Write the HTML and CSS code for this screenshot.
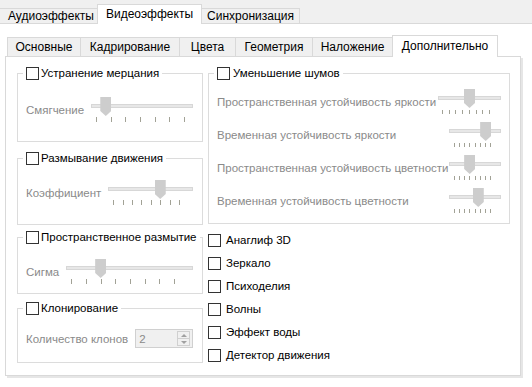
FILE: index.html
```html
<!DOCTYPE html>
<html lang="ru">
<head>
<meta charset="utf-8">
<title>Эффекты</title>
<link rel="stylesheet" href="styles.css">
</head>
<body>
<div class="topbar">
  <div class="otab o1">Аудиоэффекты</div>
  <div class="otab o2 sel">Видеоэффекты</div>
  <div class="otab o3">Синхронизация</div>
</div>
<div class="tabwidget">
  <div class="tabs">
    <div class="tab t1">Основные</div>
    <div class="tab t2">Кадрирование</div>
    <div class="tab t3">Цвета</div>
    <div class="tab t4">Геометрия</div>
    <div class="tab t5">Наложение</div>
    <div class="tab t6 sel">Дополнительно</div>
  </div>
  <div class="pane">
    <div class="col">
      <fieldset class="grp g1">
        <legend><label class="lg"><input type="checkbox"><span>Устранение мерцания</span></label></legend>
        <div class="row">
          <span class="lbl">Смягчение</span>
          <div class="slider s1" style="--v:.1">
            <div class="groove"></div><div class="handle"></div>
            <div class="ticks"><i></i><i></i><i></i><i></i><i></i><i></i><i></i></div>
          </div>
        </div>
      </fieldset>
      <fieldset class="grp g2">
        <legend><label class="lg"><input type="checkbox"><span>Размывание движения</span></label></legend>
        <div class="row">
          <span class="lbl">Коэффициент</span>
          <div class="slider s2" style="--v:.63">
            <div class="groove"></div><div class="handle"></div>
            <div class="ticks"><i></i><i></i><i></i><i></i><i></i><i></i><i></i><i></i></div>
          </div>
        </div>
      </fieldset>
      <fieldset class="grp g3">
        <legend><label class="lg"><input type="checkbox"><span>Пространственное размытие</span></label></legend>
        <div class="row">
          <span class="lbl">Сигма</span>
          <div class="slider s3" style="--v:.25">
            <div class="groove"></div><div class="handle"></div>
            <div class="ticks"><i></i><i></i><i></i><i></i><i></i><i></i><i></i><i></i></div>
          </div>
        </div>
      </fieldset>
      <fieldset class="grp g4">
        <legend><label class="lg"><input type="checkbox"><span>Клонирование</span></label></legend>
        <div class="row">
          <span class="lbl">Количество клонов</span>
          <div class="spin">
            <span class="val">2</span>
            <span class="btns"><i class="up"></i><i class="dn"></i></span>
          </div>
        </div>
      </fieldset>
    </div>
    <div class="col">
      <fieldset class="grp noise">
        <legend><label class="lg lg3"><input type="checkbox"><span>Уменьшение шумов</span></label></legend>
        <div class="nrow">
          <span class="lbl">Пространственная устойчивость яркости</span>
          <div class="slider r1" style="--v:.5">
            <div class="groove"></div><div class="handle"></div>
            <div class="ticks"><i></i><i></i><i></i><i></i><i></i><i></i><i></i><i></i></div>
          </div>
        </div>
        <div class="nrow">
          <span class="lbl">Временная устойчивость яркости</span>
          <div class="slider r2" style="--v:.76">
            <div class="groove"></div><div class="handle"></div>
            <div class="ticks"><i></i><i></i><i></i><i></i><i></i><i></i><i></i><i></i></div>
          </div>
        </div>
        <div class="nrow">
          <span class="lbl">Пространственная устойчивость цветности</span>
          <div class="slider r2" style="--v:.37">
            <div class="groove"></div><div class="handle"></div>
            <div class="ticks"><i></i><i></i><i></i><i></i><i></i><i></i><i></i><i></i></div>
          </div>
        </div>
        <div class="nrow">
          <span class="lbl">Временная устойчивость цветности</span>
          <div class="slider r2" style="--v:.58">
            <div class="groove"></div><div class="handle"></div>
            <div class="ticks"><i></i><i></i><i></i><i></i><i></i><i></i><i></i><i></i></div>
          </div>
        </div>
      </fieldset>
      <ul class="checks">
        <li><label class="ck"><input type="checkbox"><span>Анаглиф 3D</span></label></li>
        <li><label class="ck"><input type="checkbox"><span>Зеркало</span></label></li>
        <li><label class="ck"><input type="checkbox"><span>Психоделия</span></label></li>
        <li><label class="ck"><input type="checkbox"><span>Волны</span></label></li>
        <li><label class="ck"><input type="checkbox"><span>Эффект воды</span></label></li>
        <li><label class="ck"><input type="checkbox"><span>Детектор движения</span></label></li>
      </ul>
    </div>
  </div>
</div>
</body>
</html>
```
FILE: styles.css
```css
html, body {
  margin: 0;
  background: #fff;
}
body {
  font-family: "Liberation Sans", Arial, sans-serif;
  font-size: 11px;
  color: #000;
  width: 532px;
  height: 387px;
  overflow: hidden;
}

/* outer tab bar */
.topbar {
  height: 24px;
  box-sizing: border-box;
  background: #f0f0f0;
  border-bottom: 1px solid #d9d9d9;
  display: flex;
  align-items: flex-end;
}
.otab {
  box-sizing: border-box;
  height: 15px;
  line-height: 14px;
  border: 1px solid #d9d9d9;
  border-bottom: 0;
  background: #f0f0f0;
  text-align: center;
  margin-left: -1px;
  white-space: nowrap;
  font-size: 12px;
}
.otab.o1 { width: 98px; margin-left: 0; border-left: 0; text-align: left; padding-left: 8px; }
.otab.o2 { width: 105px; }
.otab.o3 { width: 99px; }
.otab.sel {
  height: 20px;
  line-height: 19px;
  background: #fff;
  margin-bottom: -1px;
}

/* inner tab widget */
.tabwidget {
  margin: 11px 0 0 5px;
}
.tabs {
  display: flex;
  align-items: flex-end;
  padding-left: 2px;
  height: 21px;
}
.tab {
  box-sizing: border-box;
  height: 19px;
  line-height: 18px;
  border: 1px solid #d9d9d9;
  border-bottom: 0;
  background: #f0f0f0;
  text-align: center;
  margin-left: -1px;
  white-space: nowrap;
  font-size: 12px;
}
.tab.t1 { width: 74px; margin-left: 0; }
.tab.t2 { width: 100px; }
.tab.t3 { width: 57px; }
.tab.t4 { width: 78px; }
.tab.t5 { width: 81px; }
.tab.t6 { width: 106px; }
.tab.sel {
  height: 22px;
  line-height: 20px;
  background: #fff;
  margin-bottom: -1px;
  position: relative;
  z-index: 1;
}

.pane {
  box-sizing: border-box;
  width: 516px;
  height: 320px;
  border: 1px solid #d9d9d9;
  box-shadow: 2px 2px 0 #e6e6e6;
  padding: 10px 10px 0 11px;
  display: grid;
  grid-template-columns: 186px 302px;
  column-gap: 5px;
  align-items: start;
}
.col {
  display: flex;
  flex-direction: column;
}

/* group boxes */
.grp {
  margin: 0;
  min-width: 0;
  border: 1px solid #dcdcdc;
  padding: 15px 9px 19px 8px;
}
.grp legend {
  padding: 0 3px;
  margin-left: -3px;
  height: 13px;
}
.lg, .ck {
  display: flex;
  align-items: center;
  gap: 2px;
  height: 13px;
  line-height: 13px;
  white-space: nowrap;
  font-size: 11.5px;
}
.lg3 { gap: 3px; }
input[type="checkbox"] {
  appearance: none;
  -webkit-appearance: none;
  box-sizing: border-box;
  width: 13px;
  height: 13px;
  margin: 0;
  border: 1px solid #333;
  background: #fff;
  flex: none;
}
.g1 { padding-top: 17px; }
.g2 { margin-top: 10px; }
.g3 { margin-top: 6px; padding-bottom: 9px; }
.g4 { margin-top: 8px; padding-top: 14px; padding-bottom: 14px; }
.noise { padding: 9px 8px 10px 8px; display: flex; flex-direction: column; gap: 8px; }

.row {
  display: flex;
  align-items: center;
  gap: 7px;
}
.nrow {
  display: flex;
  align-items: center;
  justify-content: space-between;
}
.lbl {
  color: #8a8a8a;
  white-space: nowrap;
  padding-top: 1px;
  font-size: 11.5px;
}

/* sliders */
.slider {
  position: relative;
  height: 25px;
  flex: 1;
}
.groove {
  margin-top: 7px;
  height: 4px;
  box-sizing: border-box;
  background: #e7e7e7;
  border: 1px solid #d7d7d7;
}
.handle {
  position: absolute;
  top: 0;
  left: calc((100% - 11px) * var(--v));
  width: 11px;
  height: 19px;
  background: #cdcdcd;
  clip-path: polygon(0 0, 100% 0, 100% 14px, 50% 19px, 0 14px);
}
.ticks {
  display: flex;
  justify-content: space-between;
  margin-top: 9px;
  height: 5px;
}
.ticks i {
  width: 1px;
  background: #a2a296;
}
.s1 .ticks { padding: 0 8px 0 5px; }
.s2 .ticks { padding: 0 13px 0 5px; }
.s3 .ticks { padding: 0 18px 0 5px; }
.r1 { flex: none; width: 63px; }
.r2 { flex: none; width: 52px; }
.r1 .ticks { padding: 0 11px 0 4px; margin-top: 10px; height: 4px; }
.r2 .ticks { padding: 0 10px 0 5px; margin-top: 10px; height: 4px; }

/* spin box */
.spin {
  box-sizing: border-box;
  width: 60px;
  height: 19px;
  border: 1px solid #d0d0d0;
  background: #f0f0f0;
  display: flex;
  align-items: center;
  padding-left: 3px;
  color: #8a8a8a;
  font-size: 11.5px;
}
.btns {
  margin-left: auto;
  margin-right: 2px;
  box-sizing: border-box;
  width: 13px;
  height: 15px;
  border: 1px solid #d0d0d0;
  display: flex;
  flex-direction: column;
}
.btns i {
  flex: 1;
  display: flex;
  align-items: center;
  justify-content: center;
}
.btns .up { border-bottom: 1px solid #d0d0d0; }
.btns i::before {
  content: "";
  width: 0;
  height: 0;
  border-left: 3px solid transparent;
  border-right: 3px solid transparent;
}
.btns .up::before { border-bottom: 3px solid #a0a0a0; }
.btns .dn::before { border-top: 3px solid #a0a0a0; }

/* checkbox list */
.checks {
  list-style: none;
  margin: 10px 0 0 0;
  padding: 0;
  display: flex;
  flex-direction: column;
  gap: 10px;
}
.ck { gap: 5px; }
```
